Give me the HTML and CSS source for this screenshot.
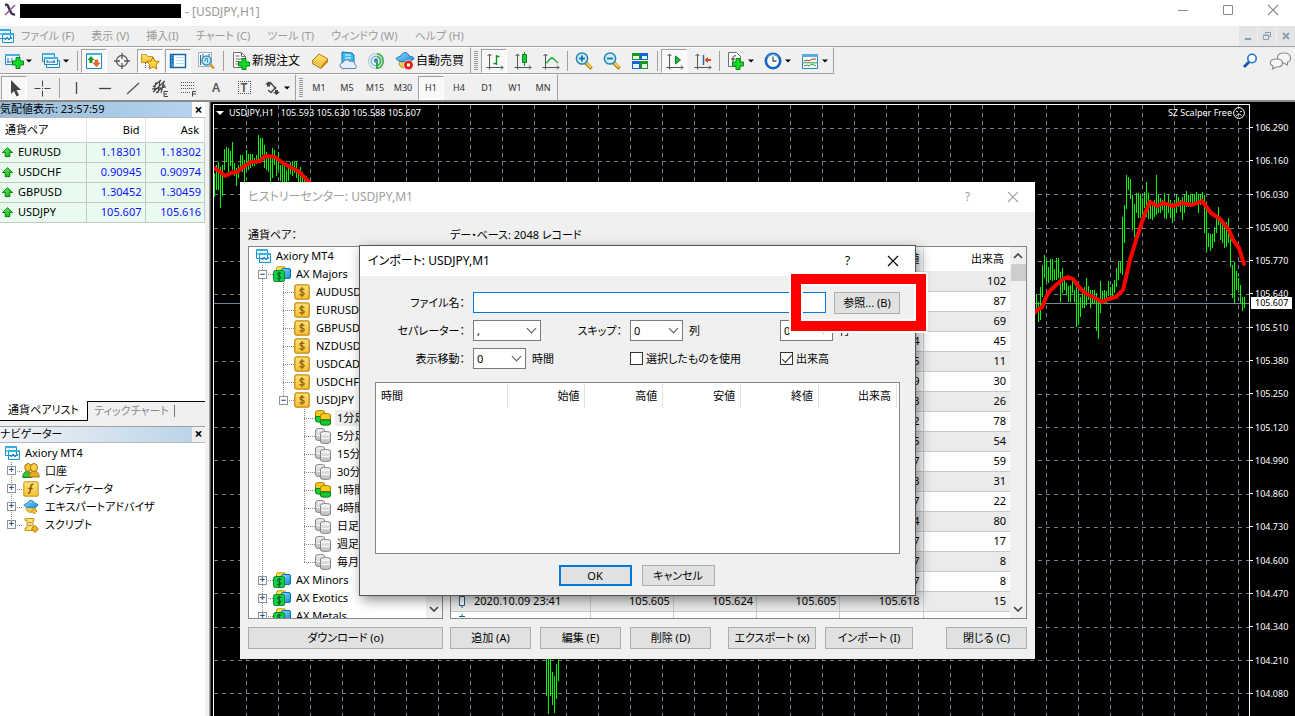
FILE: index.html
```html
<!DOCTYPE html>
<html lang="ja">
<head>
<meta charset="utf-8">
<title>[USDJPY,H1]</title>
<link rel="stylesheet" href="styles.css">
</head>
<body>
<svg class="defs" aria-hidden="true">
  <defs>
    <linearGradient id="gold" x1="0" y1="0" x2="0" y2="1"><stop offset="0" stop-color="#ffe27a"/><stop offset="1" stop-color="#f2bf35"/></linearGradient>
    <linearGradient id="green" x1="0" y1="0" x2="1" y2="1"><stop offset="0" stop-color="#6cf06c"/><stop offset="1" stop-color="#0aa80a"/></linearGradient>
    <linearGradient id="blue" x1="0" y1="0" x2="1" y2="1"><stop offset="0" stop-color="#8fdcff"/><stop offset="1" stop-color="#1489d6"/></linearGradient>
    <linearGradient id="grey" x1="0" y1="0" x2="0" y2="1"><stop offset="0" stop-color="#f2f2f2"/><stop offset="1" stop-color="#bcbcbc"/></linearGradient>
  </defs>
  <symbol id="i-plus" viewBox="0 0 12 12"><path d="M4 .5h4V4h3.500v4H8v3.500H4V8H.5V4H4z" fill="#10dc26" stroke="#078514"/></symbol>
  <symbol id="i-newchart" viewBox="0 0 20 20"><path d="M1.500 3.500h14v10h-14z" fill="#eaf8ff" stroke="#2a86b8"/><path d="M1 3h15v2H1z" fill="#4cb0de"/><path d="M4 7v5M3 11h9M8 7v3" stroke="#2879a5" fill="none"/><use href="#i-plus" x="8" y="6" width="12" height="12"/></symbol>
  <symbol id="i-profiles" viewBox="0 0 20 20"><g fill="#e8f7ff" stroke="#2a86b8"><path d="M1.500 2.500h12v8h-12z"/><path d="M5.500 9.500h13v7h-13z"/><path d="M3.500 6.500h13v7h-13z"/></g><path d="M1 2h13v2H1zM3 6h14v2H3z" fill="#4cb0de"/><path d="M6 11h8M6 9v3M13 9v3" stroke="#1674ad"/></symbol>
  <symbol id="i-watch" viewBox="0 0 20 20"><path d="M2.500 2.500h15v15h-15z" fill="#fff" stroke="#2185c4"/><path d="M2 2h16v2H2z" fill="#43aee0"/><path d="M7 5l3.500 4H8.500v3h-3V9h-2z" fill="#159a1b"/><path d="M12.500 16L9 12h2V9h3v3h2z" fill="#f26a32" stroke="#c43c10" stroke-width=".5"/></symbol>
  <symbol id="i-target" viewBox="0 0 20 20"><g fill="none" stroke="#5a5a5a" stroke-width="1.300"><circle cx="10" cy="10" r="5.500"/><path d="M10 2v6M10 12v6M2 10h6M12 10h6"/></g></symbol>
  <symbol id="i-fav" viewBox="0 0 20 20"><path d="M1.500 3.500h5l1 2h5v6h-11z" fill="url(#gold)" stroke="#c79a1d"/><path d="M5.500 12v6" stroke="#444" stroke-dasharray="1 1"/><path d="M13 6l1.900 4 4.300.6-3.100 3 .7 4.400-3.800-2.100L9.200 18l.7-4.400-3.100-3 4.300-.6z" fill="#ffd23e" stroke="#b57f12"/></symbol>
  <symbol id="i-data" viewBox="0 0 20 20"><path d="M2.500 3.500h15v13h-15z" fill="#fff" stroke="#1266a8" stroke-width="1.400"/><path d="M3 4h3v12H3z" fill="#3b94d2"/><path d="M4 5.500h1M4 8.500h1M4 11.500h1" stroke="#143d66"/><path d="M8 6.500h8M8 9.500h8M8 12.500h8" stroke="#b7e1f4"/></symbol>
  <symbol id="i-tester" viewBox="0 0 20 20"><path d="M2.500 1.500h13v14h-13z" fill="#f1f8fc" stroke="#9fb4c2"/><path d="M4.500 4v10M7 3v3M13 3v3" stroke="#3d6785"/><circle cx="10.500" cy="9.500" r="4.500" fill="#b9e4f8" stroke="#3d93c0" stroke-width="1.500"/><path d="M8.500 9.500h1V7.500h2v4" stroke="#3d93c0" fill="none"/><path d="M14 13l4 4.500" stroke="#d79a24" stroke-width="2.500"/></symbol>
  <symbol id="i-order" viewBox="0 0 20 20"><path d="M2.500 1.500h8l4 4v11h-12z" fill="#fff" stroke="#6d6d6d"/><path d="M10.500 1.500v4h4M4.500 5h4M4.500 8h8M4.500 10.500h4M4.500 13h4" stroke="#6d6d6d" fill="none"/><use href="#i-plus" x="7" y="7" width="12" height="12"/></symbol>
  <symbol id="i-book" viewBox="0 0 20 20"><path d="M2 10l7-7 9 5-7 8z" fill="url(#gold)" stroke="#b47c0c"/><path d="M2 10v3l9 5v-2zM11 16l7-8v3l-7 7z" fill="#c8860b"/><path d="M3 11.500l8 4.500" stroke="#fff2b8"/></symbol>
  <symbol id="i-cloud" viewBox="0 0 20 20"><path d="M4 1l10 1 2 2v10H4z" fill="#39b7f0" stroke="#1173ba"/><path d="M7 4h6M7 7h6" stroke="#fff"/><path d="M5 17.500a3 3 0 010-6 4 4 0 017-1 3.500 3.500 0 015 3 2.200 2.200 0 010 4z" fill="#e6eefa" stroke="#6983aa"/></symbol>
  <symbol id="i-signal" viewBox="0 0 20 20"><g fill="none"><circle cx="10" cy="10" r="7.500" stroke="#a9ccd8" stroke-width="1.200"/><circle cx="10" cy="10" r="4.800" stroke="#6fb0c8" stroke-width="1.200"/><path d="M11 2.600a7.500 7.500 0 01.5 14.600M11 5.400a4.800 4.800 0 010 9.200" stroke="#41b153" stroke-width="1.600"/></g><circle cx="10" cy="9.500" r="2.200" fill="#4381cf"/><path d="M10 11h2v7h-2z" fill="#2fa942"/></symbol>
  <symbol id="i-expert" viewBox="0 0 20 20"><path d="M6 9h8l2 3-4 4c-3 2-7 0-8-3z" fill="url(#gold)" stroke="#b88b1b"/><path d="M14 11.500l3.500 3.500-3.500 3.500-3.500-3.500z" fill="#f4c02b" stroke="#b07a0b"/><path d="M1 7.500c1-2 4-1.500 5-2.500 1-4.500 7-4.500 8 0 2 .5 4 .5 5 2.500-2 3-5 3.500-9 3.500S3 10.500 1 7.500z" fill="url(#blue)" stroke="#1479ac"/></symbol>
  <symbol id="i-auto" viewBox="0 0 20 20"><use href="#i-expert" width="20" height="20"/><circle cx="13.500" cy="14" r="4.800" fill="#e32213" stroke="#fff" stroke-width=".6"/><path d="M12 12.500h3v3h-3z" fill="#fff"/></symbol>
  <symbol id="i-axes" viewBox="0 0 20 20"><path d="M5.500 3v13.500H19M3.500 5l2-2 2 2M2.500 16.500h3v2M17 14.500l2 2-2 2" fill="none" stroke="#555"/></symbol>
  <symbol id="i-bars" viewBox="0 0 20 20"><use href="#i-axes" width="20" height="20"/><path d="M12.500 4v10M12.500 5.500h3M9.500 12.500h3" stroke="#0a9422" stroke-width="1.300"/></symbol>
  <symbol id="i-candles" viewBox="0 0 20 20"><use href="#i-axes" width="20" height="20"/><path d="M12.500 1v14" stroke="#087b1c"/><path d="M10.500 3.500h4v8h-4z" fill="#12cf35" stroke="#087b1c"/></symbol>
  <symbol id="i-line" viewBox="0 0 20 20"><use href="#i-axes" width="20" height="20"/><path d="M5 13c3-1 4-6 7-6 2 0 3 3 6 5" fill="none" stroke="#0da428" stroke-width="1.300"/></symbol>
  <symbol id="i-lens" viewBox="0 0 20 20"><path d="M11 11l6.500 6.500" stroke="#a87311" stroke-width="3.600"/><path d="M11.500 11l5.500 5.500" stroke="#ffd147" stroke-width="2"/><circle cx="8" cy="7.500" r="5.600" fill="#c9edfb" stroke="#2785b3" stroke-width="1.500"/><path d="M5 7.500h6" stroke="#1a6d9c" stroke-width="1.700"/></symbol>
  <symbol id="i-zoomin" viewBox="0 0 20 20"><use href="#i-lens" width="20" height="20"/><path d="M8 4.500v6" stroke="#1a6d9c" stroke-width="1.700"/></symbol>
  <symbol id="i-tile" viewBox="0 0 20 20"><path d="M2 2h8v7H2zM10 10h8v8h-8z" fill="#179a20"/><path d="M10 2h8v7h-8zM2 10h8v8H2z" fill="#1565d0"/><path d="M3 5h6v3H3zM12 5h5v3h-5zM3 13h6v4H3zM12 13h5v4h-5z" fill="#e9f8ff"/></symbol>
  <symbol id="i-scroll" viewBox="0 0 20 20"><use href="#i-axes" width="20" height="20"/><path d="M11.500 5l5 4-5 4z" fill="#22b544" stroke="#07882a"/></symbol>
  <symbol id="i-shift" viewBox="0 0 20 20"><use href="#i-axes" width="20" height="20"/><path d="M11.500 4v10" stroke="#246ca0" stroke-width="1.500"/><path d="M12.500 9l3.500-3v2h3v2h-3v2z" fill="#d6481c"/></symbol>
  <symbol id="i-indic" viewBox="0 0 20 20"><path d="M2.500 1.500h8l4 4v10h-12z" fill="#fff" stroke="#6d6d6d"/><path d="M10 5c-3-1-3 1-3 3v5M5 8h4" stroke="#333" fill="none"/><use href="#i-plus" x="6" y="7" width="12" height="12"/></symbol>
  <symbol id="i-clock" viewBox="0 0 20 20"><circle cx="10" cy="10" r="7.200" fill="#f2fbff" stroke="#1667bd" stroke-width="2.600"/><path d="M4.500 6a7 7 0 0111 0" fill="none" stroke="#63b6ef"/><path d="M10 5.500V10h3.500" fill="none" stroke="#555" stroke-width="1.300"/></symbol>
  <symbol id="i-tmpl" viewBox="0 0 20 20"><path d="M2.500 3.500h15v14h-15z" fill="#fff" stroke="#2985c2"/><path d="M2 3h16v3H2z" fill="#53ade0"/><path d="M4 10l3-1 2 1 3-2h4" fill="none" stroke="#ab3326"/><path d="M4 15l3-1 2 1 3-2 4 2M3 11.800h14" fill="none" stroke="#299a42"/></symbol>
  <symbol id="i-cursor" viewBox="0 0 20 20"><path d="M7 2v14l3-3 2.500 5.500 2.500-1.200-2.500-5.300H17z" fill="#444"/></symbol>
  <symbol id="i-cross" viewBox="0 0 20 20"><path d="M10.500 2.500v6M10.500 12.500v6M2.500 10.500h6M12.500 10.500h6" stroke="#444"/><path d="M10 10h1v1h-1z" fill="#444"/></symbol>
  <symbol id="i-v" viewBox="0 0 20 20"><path d="M10.500 4v12" stroke="#444" stroke-width="1.300"/></symbol>
  <symbol id="i-h" viewBox="0 0 20 20"><path d="M5 10.500h12" stroke="#444" stroke-width="1.300"/></symbol>
  <symbol id="i-trend" viewBox="0 0 20 20"><path d="M5 16L17 5" stroke="#555" stroke-width="1.300"/></symbol>
  <symbol id="i-channel" viewBox="0 0 20 20"><path d="M3 14L15 3M3 9l8-7M6 15l9-8M6 4L4 14M10 3L8 15M14 3l-3 12M2 11l14-2" stroke="#444" stroke-width="1.100"/><path d="M18 13.500h-4v5h4M14 16h3" fill="none" stroke="#444"/></symbol>
  <symbol id="i-fibo" viewBox="0 0 20 20"><path d="M3 4.500h14M3 7.500h14M3 10.500h14M3 14.500h10" stroke="#555" stroke-dasharray="1 1"/><path d="M18 13.500h-3.500v5M14.500 16H18" fill="none" stroke="#444"/></symbol>
  <symbol id="i-arrows" viewBox="0 0 20 20"><path d="M6.500 3.500l3.500 3H8v2H5v-2H3zM14.500 17l-3.500-3h2v-2h3v2h2z" fill="#444"/><path d="M6 12l3 2.500 5-5.500M8 4l6 7" fill="none" stroke="#444" stroke-width="1.300"/></symbol>
  <symbol id="i-caret" viewBox="0 0 8 8"><path d="M1 2.500h6L4 5.500z" fill="#000"/></symbol>
  <symbol id="i-find" viewBox="0 0 16 16"><circle cx="10" cy="5.500" r="4.200" fill="#fff" stroke="#1e74cf" stroke-width="1.600"/><path d="M7 9l-5 5" stroke="#1558ae" stroke-width="2.800"/></symbol>
  <symbol id="i-chat" viewBox="0 0 22 18"><g fill="#f7f7f7" stroke="#8b8b8b" stroke-width="1.200"><path d="M14 1c5 0 7 2 7 5s-2 4-3 4v3l-4-2c-4 0-6-2-6-5s2-5 6-5z"/><path d="M7 7c4 0 6 1.500 6 4s-2 4-6 4l-4 2 .5-3C1 13 .8 12 .8 11c0-2.500 2-4 6.200-4z"/></g></symbol>
  <symbol id="i-up" viewBox="0 0 12 12"><path d="M6 .8L11.500 6H8.500v4.500h-5V6H.5z" fill="url(#green)" stroke="#067406"/></symbol>
  <symbol id="i-mt" viewBox="0 0 16 16"><path d="M1.500 1.500h11v9h-11zM4.500 5.500h11v9h-11z" fill="#edfaff" stroke="#1794ce"/><path d="M1 1h12v2H1zM4 5h12v2H4z" fill="#38afe2"/><path d="M6 10l1.500 2L9 9l2 3 2-3 1 2M3 5v2" fill="none" stroke="#2580b5"/></symbol>
  <symbol id="i-group" viewBox="0 0 18 16"><rect x="3.500" y=".8" width="9" height="9" rx="1.500" fill="#ffe34c" stroke="#b59a09"/><rect x="8.500" y="2.500" width="9" height="10" rx="1.500" fill="url(#blue)" stroke="#0874a8"/><rect x=".6" y="4.600" width="11" height="11" rx="1.800" fill="#12d44a" stroke="#067d25"/><path d="M8.500 7.500c-5-2-5 2-2.300 2.500 3 .7 2.300 4-2.500 2.300M6.200 6v9" fill="none" stroke="#064f16"/></symbol>
  <symbol id="i-sym" viewBox="0 0 16 16"><rect x=".8" y=".8" width="14.400" height="14.400" rx="2" fill="url(#gold)" stroke="#c58a10" stroke-width="1.300"/><path d="M10.500 5.500C5 3.500 5 7.500 8 8c3.500.7 3 4.500-2.700 2.600M8 3v10" fill="none" stroke="#8a5a04" stroke-width="1.100"/></symbol>
  <symbol id="i-db" viewBox="0 0 16 16"><g fill="url(#grey)" stroke="#858585"><path d="M.6 2c0-2 9-2 9 0v9c0 2-9 2-9 0z"/><path d="M5.500 5c0-2 10-2 10 0v9c0 2-10 2-10 0z"/></g><path d="M1 6.500c1 1 3 1 4 1M6 9.800c2 1 7 1 9 0M6 5.600c2 1 7 1 9 0" stroke="#fff" fill="none"/></symbol>
  <symbol id="i-dbon" viewBox="0 0 16 16"><path d="M.6 2c0-2 9-2 9 0v4.500h-9z" fill="#f3cc1c" stroke="#a47d06"/><path d="M.6 6.500h8V11c0 1.500-8 1.500-8 0z" fill="#19cf33" stroke="#078016"/><path d="M5.500 5c0-2 10-2 10 0v4.500h-10z" fill="#f3cc1c" stroke="#a47d06"/><path d="M5.500 10h10v4c0 1.700-10 1.700-10 0z" fill="#16c82f" stroke="#078016"/></symbol>
  <symbol id="i-acct" viewBox="0 0 18 16"><path d="M.8 14.500C.8 6 10 6 10 14.500z" fill="#2fc43e" stroke="#12841e"/><ellipse cx="6" cy="4.500" rx="3.300" ry="4" fill="#f5c33a" stroke="#a8740c"/><path d="M7 14c0-8 10-8 10.200 0z" fill="#e6aa1d" stroke="#a8740c"/><ellipse cx="12" cy="4.500" rx="3.500" ry="4" fill="#ffd34a" stroke="#a8740c"/></symbol>
  <symbol id="i-func" viewBox="0 0 16 16"><rect x=".8" y=".8" width="14.400" height="14.400" rx="1" fill="url(#gold)" stroke="#c7950f"/><path d="M10.500 3.500c-3-.8-2.500 2-3 5s-.8 4-2.500 3.500M5.500 7.500h4" fill="none" stroke="#7b4f05" stroke-width="1.300"/></symbol>
  <symbol id="i-script" viewBox="0 0 16 16"><path d="M2 1.500h9v2H10V11h3v2.500H2V11h2V3.500H2z" fill="#ffe07a" stroke="#c3921b"/><path d="M5.500 5.500h3M5.500 8.500h3" stroke="#b2831b"/><path d="M12 8.500l3.500 3.500-3.500 3.500L8.500 12z" fill="#f0b31b" stroke="#b07a0b"/></symbol>
  <symbol id="i-x" viewBox="0 0 12 12"><path d="M1 1l10 10M11 1L1 11" fill="none" stroke="currentColor" stroke-width="1.100"/></symbol>
  <symbol id="i-chev" viewBox="0 0 10 6"><path d="M1 1l4 4 4-4" fill="none" stroke="currentColor" stroke-width="1.600"/></symbol>
</svg>

<header class="titlebar">
  <svg class="logo" viewBox="0 0 14 14"><path d="M2 2c3-1 3 1 4.500 4.500S9 12 12 11.500" fill="none" stroke="#3e2a55" stroke-width="2.400"/><path d="M12 2L2 12" stroke="#8a4f91" stroke-width="1.500"/></svg>
  <span class="redacted"></span>
  <span class="caption">- [USDJPY,H1]</span>
  <div class="wincontrols">
    <button aria-label="最小化"><svg viewBox="0 0 12 12"><path d="M1 6.500h10" stroke="currentColor"/></svg></button>
    <button aria-label="最大化"><svg viewBox="0 0 12 12"><path d="M1.500 1.500h9v9h-9z" fill="none" stroke="currentColor"/></svg></button>
    <button aria-label="終了"><svg><use href="#i-x"/></svg></button>
  </div>
</header>
<nav class="menubar">
  <svg class="i16"><use href="#i-mt"/></svg>
  <button>ファイル (F)</button><button>表示 (V)</button><button>挿入(I)</button><button>チャート (C)</button><button>ツール (T)</button><button>ウィンドウ (W)</button><button>ヘルプ (H)</button>
  <div class="mdi">
    <button aria-label="子を最小化"><svg viewBox="0 0 10 10"><path d="M2 8h6" stroke="currentColor" stroke-width="2"/></svg></button>
    <button aria-label="元に戻す"><svg viewBox="0 0 10 10"><path d="M3.500 3V1.500h5v4H7M1.500 4.500h5v4h-5zM1 4h6M3 1.500h6" fill="none" stroke="currentColor"/></svg></button>
    <button aria-label="子を閉じる"><svg viewBox="0 0 10 10"><path d="M2 2l6 6M8 2L2 8" stroke="currentColor" stroke-width="2"/></svg></button>
  </div>
</nav>

<div class="toolbars">
  <div class="toolrow">
    <div class="bar">
      <button class="tool drop" aria-label="新規チャート"><svg><use href="#i-newchart"/></svg><svg class="caret"><use href="#i-caret"/></svg></button>
      <button class="tool drop" aria-label="プロファイル"><svg><use href="#i-profiles"/></svg><svg class="caret"><use href="#i-caret"/></svg></button>
      <i class="sep"></i>
      <button class="tool on" aria-label="気配値"><svg><use href="#i-watch"/></svg></button>
      <button class="tool" aria-label="ターゲット"><svg><use href="#i-target"/></svg></button>
      <button class="tool on" aria-label="ナビゲーター"><svg><use href="#i-fav"/></svg></button>
      <button class="tool on" aria-label="ターミナル"><svg><use href="#i-data"/></svg></button>
      <button class="tool" aria-label="テスター"><svg><use href="#i-tester"/></svg></button>
      <i class="sep"></i>
      <button class="tool wide"><svg><use href="#i-order"/></svg>新規注文</button>
      <button class="tool" aria-label="MetaEditor"><svg><use href="#i-book"/></svg></button>
      <button class="tool" aria-label="クラウド"><svg><use href="#i-cloud"/></svg></button>
      <button class="tool" aria-label="シグナル"><svg><use href="#i-signal"/></svg></button>
      <button class="tool wide"><svg><use href="#i-auto"/></svg>自動売買</button>
    </div>
    <div class="bar">
      <i class="grip"></i>
      <button class="tool on" aria-label="バー"><svg><use href="#i-bars"/></svg></button>
      <button class="tool" aria-label="ローソク足"><svg><use href="#i-candles"/></svg></button>
      <button class="tool" aria-label="ライン"><svg><use href="#i-line"/></svg></button>
      <i class="sep"></i>
      <button class="tool" aria-label="拡大"><svg><use href="#i-zoomin"/></svg></button>
      <button class="tool" aria-label="縮小"><svg><use href="#i-lens"/></svg></button>
      <button class="tool" aria-label="整列"><svg><use href="#i-tile"/></svg></button>
      <i class="sep"></i>
      <button class="tool on" aria-label="自動スクロール"><svg><use href="#i-scroll"/></svg></button>
      <button class="tool" aria-label="シフト"><svg><use href="#i-shift"/></svg></button>
      <i class="sep"></i>
      <button class="tool drop" aria-label="インディケータ"><svg><use href="#i-indic"/></svg><svg class="caret"><use href="#i-caret"/></svg></button>
      <button class="tool drop" aria-label="時間足"><svg><use href="#i-clock"/></svg><svg class="caret"><use href="#i-caret"/></svg></button>
      <button class="tool drop" aria-label="テンプレート"><svg><use href="#i-tmpl"/></svg><svg class="caret"><use href="#i-caret"/></svg></button>
    </div>
    <div class="right">
      <button aria-label="検索"><svg class="i16"><use href="#i-find"/></svg></button>
      <button aria-label="チャット"><svg class="chat"><use href="#i-chat"/></svg></button>
    </div>
  </div>
  <div class="toolrow">
    <div class="bar">
      <button class="tool on" aria-label="カーソル"><svg><use href="#i-cursor"/></svg></button>
      <button class="tool" aria-label="十字"><svg><use href="#i-cross"/></svg></button>
      <i class="sep"></i>
      <button class="tool" aria-label="垂直線"><svg><use href="#i-v"/></svg></button>
      <button class="tool" aria-label="水平線"><svg><use href="#i-h"/></svg></button>
      <button class="tool" aria-label="トレンドライン"><svg><use href="#i-trend"/></svg></button>
      <button class="tool" aria-label="チャネル"><svg><use href="#i-channel"/></svg></button>
      <button class="tool" aria-label="フィボナッチ"><svg><use href="#i-fibo"/></svg></button>
      <button class="tool letter">A</button>
      <button class="tool letter framed">T</button>
      <button class="tool drop" aria-label="矢印"><svg><use href="#i-arrows"/></svg><svg class="caret"><use href="#i-caret"/></svg></button>
    </div>
    <div class="bar">
      <i class="grip"></i>
      <button class="tool">M1</button><button class="tool">M5</button><button class="tool">M15</button><button class="tool">M30</button><button class="tool on">H1</button><button class="tool">H4</button><button class="tool">D1</button><button class="tool">W1</button><button class="tool">MN</button>
    </div>
  </div>
</div>

<main class="work">
  <aside class="side">
    <section class="watch">
      <div class="dockhead strong"><h2>気配値表示: 23:57:59</h2><button aria-label="閉じる">×</button></div>
      <table class="quotes">
        <thead><tr><th>通貨ペア</th><th>Bid</th><th>Ask</th></tr></thead>
        <tbody>
          <tr><td><svg><use href="#i-up"/></svg>EURUSD</td><td>1.18301</td><td>1.18302</td></tr>
          <tr><td><svg><use href="#i-up"/></svg>USDCHF</td><td>0.90945</td><td>0.90974</td></tr>
          <tr><td><svg><use href="#i-up"/></svg>GBPUSD</td><td>1.30452</td><td>1.30459</td></tr>
          <tr><td><svg><use href="#i-up"/></svg>USDJPY</td><td>105.607</td><td>105.616</td></tr>
        </tbody>
      </table>
      <div class="tabs"><button class="active">通貨ペアリスト</button><button>ティックチャート</button></div>
    </section>
    <section class="navi">
      <div class="dockhead"><h2>ナビゲーター</h2><button aria-label="閉じる">×</button></div>
      <ul class="tree">
        <li><svg><use href="#i-mt"/></svg>Axiory MT4</li>
        <li><i class="g v h"><b>+</b></i><svg class="w18"><use href="#i-acct"/></svg>口座</li>
        <li><i class="g v h"><b>+</b></i><svg class="w18"><use href="#i-func"/></svg>インディケータ</li>
        <li><i class="g v h"><b>+</b></i><svg class="w18"><use href="#i-expert"/></svg>エキスパートアドバイザ</li>
        <li><i class="g v h last"><b>+</b></i><svg class="w18"><use href="#i-script"/></svg>スクリプト</li>
      </ul>
    </section>
  </aside>
  <section class="chart">
    <div class="plot">
      <svg id="plot"></svg>
      <div class="plothead"><span class="ohlc"><svg class="caret" viewBox="0 0 8 8"><path d="M0 2h8L4 6z" fill="#fff"/></svg><b>USDJPY,H1</b>105.593 105.630 105.588 105.607</span>
        <span class="ea">SZ Scalper Free<svg viewBox="0 0 12 12"><g fill="none" stroke="#fff"><circle cx="6" cy="6" r="5.400"/><path d="M3.500 9c1-2.500 4-2.500 5 0M3 4l2 1M9 4L7 5"/></g></svg></span></div>
    </div>
    <div class="prices">
      <span>106.290</span><span>106.160</span><span>106.030</span><span>105.900</span><span>105.770</span><span>105.640</span><span>105.510</span><span>105.380</span><span>105.250</span><span>105.120</span><span>104.990</span><span>104.860</span><span>104.730</span><span>104.600</span><span>104.470</span><span>104.340</span><span>104.210</span><span>104.080</span>
      <strong class="now">105.607</strong>
    </div>
  </section>
</main>

<div class="window history" role="dialog" aria-label="ヒストリーセンター">
  <div class="wtitle"><h1>ヒストリーセンター: USDJPY,M1</h1><button>?</button><button aria-label="閉じる"><svg><use href="#i-x"/></svg></button></div>
  <div class="hbody">
    <div class="hleft">
      <p>通貨ペア：</p>
      <div class="box">
        <ul class="tree">
          <li><svg><use href="#i-mt"/></svg>Axiory MT4</li>
          <li><i class="g v h"><b>−</b></i><svg class="w18"><use href="#i-group"/></svg>AX Majors</li>
          <li><i class="g v"></i><i class="g v h"></i><svg><use href="#i-sym"/></svg>AUDUSD</li>
          <li><i class="g v"></i><i class="g v h"></i><svg><use href="#i-sym"/></svg>EURUSD</li>
          <li><i class="g v"></i><i class="g v h"></i><svg><use href="#i-sym"/></svg>GBPUSD</li>
          <li><i class="g v"></i><i class="g v h"></i><svg><use href="#i-sym"/></svg>NZDUSD</li>
          <li><i class="g v"></i><i class="g v h"></i><svg><use href="#i-sym"/></svg>USDCAD</li>
          <li><i class="g v"></i><i class="g v h"></i><svg><use href="#i-sym"/></svg>USDCHF</li>
          <li><i class="g v"></i><i class="g v h last"><b>−</b></i><svg><use href="#i-sym"/></svg>USDJPY</li>
          <li><i class="g v"></i><i class="g"></i><i class="g v h"></i><svg><use href="#i-dbon"/></svg><span class="sel">1分足 (M1)</span></li>
          <li><i class="g v"></i><i class="g"></i><i class="g v h"></i><svg><use href="#i-db"/></svg>5分足</li>
          <li><i class="g v"></i><i class="g"></i><i class="g v h"></i><svg><use href="#i-db"/></svg>15分足</li>
          <li><i class="g v"></i><i class="g"></i><i class="g v h"></i><svg><use href="#i-db"/></svg>30分足</li>
          <li><i class="g v"></i><i class="g"></i><i class="g v h"></i><svg><use href="#i-dbon"/></svg>1時間足</li>
          <li><i class="g v"></i><i class="g"></i><i class="g v h"></i><svg><use href="#i-db"/></svg>4時間足</li>
          <li><i class="g v"></i><i class="g"></i><i class="g v h"></i><svg><use href="#i-db"/></svg>日足</li>
          <li><i class="g v"></i><i class="g"></i><i class="g v h"></i><svg><use href="#i-db"/></svg>週足</li>
          <li><i class="g v"></i><i class="g"></i><i class="g v h last"></i><svg><use href="#i-db"/></svg>毎月</li>
          <li><i class="g v h"><b>+</b></i><svg class="w18"><use href="#i-group"/></svg>AX Minors</li>
          <li><i class="g v h"><b>+</b></i><svg class="w18"><use href="#i-group"/></svg>AX Exotics</li>
          <li><i class="g v h"><b>+</b></i><svg class="w18"><use href="#i-group"/></svg>AX Metals</li>
        </ul>
        <div class="scroll"><svg class="flip"><use href="#i-chev"/></svg><i class="thumb"></i><svg class="down"><use href="#i-chev"/></svg></div>
      </div>
      <button class="btn">ダウンロード (o)</button>
    </div>
    <div class="hright">
      <p>デー・ベース: 2048 レコード</p>
      <div class="box">
        <table class="records">
          <colgroup><col class="c-time"><col><col><col><col><col class="c-vol"></colgroup>
          <thead><tr><th>時間</th><th>始値</th><th>高値</th><th>安値</th><th>終値</th><th>出来高</th></tr></thead>
          <tbody>
            <tr><td></td><td></td><td></td><td></td><td></td><td>102</td></tr>
            <tr><td></td><td></td><td></td><td></td><td></td><td>87</td></tr>
            <tr><td></td><td></td><td></td><td></td><td></td><td>69</td></tr>
            <tr><td></td><td></td><td></td><td></td><td>105.614</td><td>45</td></tr>
            <tr><td></td><td></td><td></td><td></td><td>105.615</td><td>11</td></tr>
            <tr><td></td><td></td><td></td><td></td><td>105.619</td><td>30</td></tr>
            <tr><td></td><td></td><td></td><td></td><td>105.613</td><td>26</td></tr>
            <tr><td></td><td></td><td></td><td></td><td>105.612</td><td>78</td></tr>
            <tr><td></td><td></td><td></td><td></td><td>105.615</td><td>54</td></tr>
            <tr><td></td><td></td><td></td><td></td><td>105.617</td><td>59</td></tr>
            <tr><td></td><td></td><td></td><td></td><td>105.613</td><td>31</td></tr>
            <tr><td></td><td></td><td></td><td></td><td>105.617</td><td>22</td></tr>
            <tr><td></td><td></td><td></td><td></td><td>105.614</td><td>80</td></tr>
            <tr><td></td><td></td><td></td><td></td><td>105.617</td><td>17</td></tr>
            <tr><td></td><td></td><td></td><td></td><td>105.617</td><td>8</td></tr>
            <tr><td></td><td></td><td></td><td></td><td>105.617</td><td>8</td></tr>
            <tr><td><svg viewBox="0 0 8 14"><path d="M1.500 2.500h5v9h-5zM4 0v2M4 12v2" fill="#fff" stroke="#1b5f86"/></svg>2020.10.09 23:41</td><td>105.605</td><td>105.624</td><td>105.605</td><td>105.618</td><td>15</td></tr>
            <tr><td><svg viewBox="0 0 8 14"><path d="M4 0v3M1 2.500h6" fill="none" stroke="#1b5f86"/></svg></td><td></td><td></td><td></td><td></td><td></td></tr>
          </tbody>
        </table>
        <div class="scroll"><svg class="flip"><use href="#i-chev"/></svg><i class="thumb"></i><svg class="down"><use href="#i-chev"/></svg></div>
      </div>
      <div class="actions"><button class="btn">追加 (A)</button><button class="btn">編集 (E)</button><button class="btn">削除 (D)</button><i></i><button class="btn long">エクスポート (x)</button><button class="btn long">インポート (I)</button><button class="btn end">閉じる (C)</button></div>
    </div>
  </div>
</div>

<div class="window import" role="dialog" aria-label="インポート">
  <div class="wtitle"><h1>インポート: USDJPY,M1</h1><button>?</button><button aria-label="閉じる"><svg><use href="#i-x"/></svg></button></div>
  <form class="form" onsubmit="return false">
    <label for="file">ファイル名：</label>
    <div class="cell filerow"><input type="text" id="file"><button class="btn">参照... (B)</button></div>
    <label for="delim">セパレーター：</label>
    <div class="cell"><span class="pick wide"><select id="delim"><option>,</option></select></span><label class="push" for="skipc">スキップ：</label></div>
    <div class="cell"><span class="pick"><select id="skipc"><option>0</option></select></span><label for="skipc">列</label></div>
    <div class="cell"><span class="pick"><select id="skipr"><option>0</option></select></span><label for="skipr">行</label></div>
    <label for="shift">表示移動：</label>
    <div class="cell"><span class="pick"><select id="shift"><option>0</option></select></span><label for="shift">時間</label></div>
    <div class="cell check"><input type="checkbox" id="usesel"><label for="usesel">選択したものを使用</label></div>
    <div class="cell check"><input type="checkbox" id="vol" checked><label for="vol">出来高</label></div>
  </form>
  <div class="preview">
    <table><thead><tr><th>時間</th><th>始値</th><th>高値</th><th>安値</th><th>終値</th><th>出来高</th></tr></thead></table>
  </div>
  <div class="confirm"><button class="btn primary">OK</button><button class="btn">キャンセル</button></div>
  <div class="mark"></div>
</div>
<script src="chart.js"></script>
</body>
</html>
```

FILE: styles.css
```css
*, *::before, *::after { box-sizing: border-box; }
html, body { height: 100%; }
body {
  margin: 0; display: flex; flex-direction: column; overflow: hidden; position: relative;
  background: #f0f0f0; color: #000;
  font: 11px/16px "Noto Sans", "Noto Sans CJK JP", sans-serif;
  font-feature-settings: "palt";
}
button, input, select { font: inherit; color: inherit; font-feature-settings: inherit; }
button { margin: 0; padding: 0; border: 0; background: none; white-space: nowrap; }
h1, h2, p, ul { margin: 0; padding: 0; font-weight: 400; font-size: inherit; list-style: none; }
svg { flex: none; display: block; }
.defs { position: absolute; width: 0; height: 0; }
.i16 { width: 16px; height: 16px; }

.titlebar { flex: none; height: 26px; display: flex; align-items: flex-start; background: #fff; color: #999; font-size: 12px; padding: 3px 0 0 3px; }
.logo { width: 14px; height: 14px; margin-right: 3px; }
.redacted { width: 161px; height: 14px; background: #000; margin-top: 1px; }
.caption { margin-left: 4px; line-height: 18px; }
.wincontrols { margin-left: auto; display: flex; }
.wincontrols button { width: 45px; height: 14px; display: flex; justify-content: center; align-items: center; color: #888; }
.wincontrols svg { width: 12px; height: 12px; }

.menubar { flex: none; height: 21px; display: flex; align-items: center; gap: 17px; color: #9a9a9a; border-bottom: 1px solid #a0a0a0; }
.menubar > .i16 { margin: 0 -10px 0 -2px; }
.mdi { margin-left: auto; display: flex; gap: 1px; align-self: stretch; }
.mdi button { width: 18px; background: #e4e4e4; color: #8aa0b2; display: flex; justify-content: center; align-items: center; }
.mdi svg { width: 10px; height: 10px; }

.toolbars { flex: none; border-bottom: 2px solid #8a8a8a; }
.toolrow { display: flex; height: 27px; }
.bar { display: flex; align-items: center; border-right: 1px solid #a0a0a0; border-bottom: 1px solid #a0a0a0; border-top: 1px solid #fff; }
.toolrow + .toolrow { height: 26px; }
.toolrow + .toolrow .bar { border-bottom: 0; }
.tool { width: 28px; height: 24px; display: flex; align-items: center; justify-content: center; border: 1px solid transparent; font-size: 9px; color: #333; }
.tool svg { width: 20px; height: 20px; }
.tool .caret, .caret { width: 8px; height: 8px; }
.tool.on { border-color: #a0a0a0 #fff #fff #a0a0a0; background: #f8f8f8; width: 26px; margin: 0 1px; }
.tool.drop { width: 37px; gap: 1px; }
.tool.wide { width: 80px; font-size: 12px; color: #000; justify-content: flex-start; padding-left: 4px; gap: 1px; }
.sep { width: 6px; height: 20px; background: linear-gradient(#a0a0a0, #a0a0a0) center / 1px 100% no-repeat; }
.grip { width: 4px; height: 20px; margin: 0 2px 0 3px; background: repeating-linear-gradient(#999 0 1px, #f0f0f0 1px 2px); }
.tool.letter { font-size: 12px; font-weight: 600; color: #555; }
.framed { position: relative; }
.framed::after { content: ""; width: 13px; height: 13px; position: absolute; border: 1px dotted #555; }
.right { margin-left: auto; display: flex; align-items: center; gap: 11px; padding-right: 3px; }
.chat { width: 23px; height: 18px; }

.work { flex: 1; min-height: 0; display: flex; }
.side { flex: none; width: 210px; padding-right: 4px; display: flex; flex-direction: column; border-right: 1px solid #a0a0a0; }
.watch { flex: 322 1 0; min-height: 0; display: flex; flex-direction: column; padding-bottom: 5px; background: #fff; }
.navi { flex: 292 1 0; min-height: 0; display: flex; flex-direction: column; border-top: 1px solid #a0a0a0; }
.dockhead { flex: none; display: flex; height: 16px; border-bottom: 1px solid #b8b8b8; }
.dockhead h2 { flex: 1; line-height: 14px; background: linear-gradient(90deg, #f0f3f6, #bcd4e8); }
.dockhead.strong h2 { background: linear-gradient(90deg, #98bddb, #b4d3ee); }
.dockhead button { width: 13px; font-size: 14px; line-height: 14px; font-weight: 700; }
.quotes { width: 100%; border-collapse: collapse; background: #fff; table-layout: fixed; }
.quotes th { height: 24px; font-weight: 400; text-align: right; padding: 0 5px; border-right: 1px solid #e0e0e0; }
.quotes th:first-child { text-align: left; width: 86px; }
.quotes th:nth-child(2) { width: 59px; }
.quotes td { height: 20px; padding: 0 3px; border: 1px solid #c4c9c4; border-left: 0; background: #e9fbef; text-align: right; color: #11f; line-height: 18px; }
.quotes td:first-child { text-align: left; color: #000; padding-left: 2px; }
.quotes td svg { display: inline-block; width: 11px; height: 11px; margin-right: 5px; vertical-align: -2px; }
.tabs { margin-top: auto; display: flex; height: 20px; border-top: 1px solid #000; background: #f0f0f0; box-shadow: 0 6px #f0f0f0; }
.tabs button { width: 87px; color: #888; background: linear-gradient(#777, #777) right center / 1px 12px no-repeat; }
.tabs button.active { width: 88px; color: #000; background: #fff; border: solid #000; border-width: 0 1px 1px 0; margin-top: -1px; }

.tree li { display: flex; align-items: center; height: 18px; white-space: nowrap; }
.tree li > svg { width: 16px; height: 16px; margin-right: 6px; }
.tree li > svg.w18 { width: 18px; margin-right: 5px; }
.tree li > svg:first-child { margin: 0 5px 0 3px; }
.navi .tree { flex: 1; background: #fff; padding: 1px; }
.g { width: 21px; height: 18px; position: relative; display: flex; align-items: center; justify-content: center; }
.g.v { background-image: repeating-linear-gradient(#888 0 1px, transparent 1px 2px); background-size: 1px 100%; background-position: 10px 0; background-repeat: no-repeat; }
.g.last { background-size: 1px 50%; }
.g.h::before { content: ""; position: absolute; left: 10px; right: 0; top: 9px; border-top: 1px dotted #888; }
.g b { position: relative; width: 9px; height: 9px; border: 1px solid #919191; background: #fff; color: #234a9c; font: 700 9px/7px "Liberation Sans", sans-serif; text-align: center; }
.sel { background: #ececec; padding: 0 2px; margin-left: -2px; }

.chart { flex: 1; min-width: 0; display: flex; background: #000; color: #fff; padding: 2px 0 0 2px; border-left: 1px solid #555; font-size: 9px; }
.plot { flex: 1; min-width: 0; position: relative; border: solid #fff; border-width: 1px 1px 0 1px; overflow: hidden; }
#plot { width: 100%; height: 100%; position: absolute; }
.plothead { position: relative; display: flex; justify-content: space-between; padding: 1px 4px 0 2px; line-height: 14px; }
.plothead span { display: flex; align-items: center; }
.ohlc svg { margin-right: 5px; }
.ohlc b { font-weight: 400; margin-right: 7px; }
.ea svg { width: 12px; height: 12px; margin-left: 1px; }
.prices { position: relative; flex: none; width: 45px; display: flex; flex-direction: column; justify-content: space-between; padding: 18px 0 16px; line-height: 12px; }
.prices span::before { content: ""; display: inline-block; width: 3px; height: 1px; background: #fff; vertical-align: 3px; margin-right: 2px; }
.now { position: absolute; left: 1px; right: 3px; top: 193px; padding-left: 4px; background: #fff; color: #000; font-weight: 400; }

.window { position: absolute; background: #f0f0f0; display: flex; flex-direction: column; }
.wtitle { flex: none; height: 30px; display: flex; align-items: center; background: #fff; padding: 0 0 0 8px; font-size: 12px; }
.wtitle h1 { flex: 1; }
.wtitle button { width: 45px; display: flex; justify-content: center; }
.wtitle svg { width: 12px; height: 12px; }
.history { left: 240px; top: 182px; width: 795px; height: 477px; }
.history .wtitle { color: #a0a0a0; }
.hbody { flex: 1; min-height: 0; display: flex; gap: 7px; padding: 15px 8px 10px; }
.hleft { width: 195px; display: flex; flex-direction: column; }
.hright { flex: 1; display: flex; flex-direction: column; }
.hbody p { height: 19px; }
.box { flex: 1; min-height: 0; display: flex; border: 1px solid #828790; background: #fff; overflow: hidden; margin-bottom: 8px; }
.box .tree { flex: 1; padding-left: 3px; }
.scroll { flex: none; width: 16px; background: #f0f0f0; color: #444; display: flex; flex-direction: column; align-items: center; padding: 6px 0; }
.scroll svg { width: 10px; height: 6px; }
.flip { transform: rotate(180deg); }
.thumb { width: 15px; height: 17px; background: #cdcdcd; margin-top: 5px; }
.down { margin-top: auto; }
.btn { height: 22px; border: 1px solid #adadad; background: #e1e1e1; text-align: center; line-height: 20px; }
.actions { display: flex; gap: 9px; }
.actions .btn { width: 81px; }
.actions i { margin-right: -1px; }
.actions .long { width: 88px; }
.actions .end { margin-left: auto; }
.records { flex: 1; border-collapse: collapse; table-layout: fixed; height: 0; }
.c-time { width: 139px; }
.c-vol { width: 87px; }
.records th, .records td { text-align: right; padding: 0 3px; border-right: 1px solid #c9c9c9; font-weight: 400; }
.records th { height: 24px; border-color: #e0e0e0; }
.records td { height: 20px; border-bottom: 1px solid #c9c9c9; line-height: 18px; }
.records th:last-child, .records td:last-child { border-right: 0; padding-right: 4px; }
.records th:last-child { padding-right: 6px; }
.records td:first-child { text-align: left; padding-left: 7px; }
.records td svg { display: inline-block; width: 8px; height: 14px; margin-right: 8px; vertical-align: -3px; }
.records tbody tr:nth-child(odd) { background: #ebebeb; }

.import { left: 359px; top: 245px; width: 557px; height: 351px; border: 1px solid #555; box-shadow: 3px 4px 12px rgba(0, 0, 0, .45); }
.form { display: grid; grid-template-columns: 104px 149px 142px 1fr; gap: 7px 8px; padding: 16px 15px 0 1px; align-items: center; }
.form > label { text-align: right; }
.cell { display: flex; align-items: center; height: 21px; white-space: nowrap; }
.filerow { grid-column: 2 / 5; gap: 8px; }
.filerow input { flex: 1; min-width: 0; height: 21px; border: 1px solid #0078d7; background: #fff; outline: 0; }
.filerow .btn { width: 66px; }
.pick { position: relative; width: 53px; margin-right: 6px; }
.pick.wide { width: 68px; }
.pick select { width: 100%; height: 21px; border: 1px solid #7a7a7a; border-radius: 0; background: #fff; appearance: none; padding: 0 3px; display: block; }
.pick::after { content: ""; position: absolute; right: 6px; top: 5px; width: 7px; height: 7px; border: solid #555; border-width: 0 1px 1px 0; transform: rotate(45deg); pointer-events: none; }
.push { margin-left: auto; }
.check input { appearance: none; width: 13px; height: 13px; margin: 0 3px 0 0; border: 1px solid #333; background: #fff; display: grid; place-items: center; }
.check input:checked::before { content: ""; width: 10px; height: 5px; border: solid #333; border-width: 0 0 1px 1px; transform: translateY(-1px) rotate(-48deg); }
.preview { flex: 1; margin: 13px 15px 11px; border: 1px solid #828790; background: #fff; padding: 1px 2px 0 0; }
.preview table { width: 100%; border-collapse: collapse; table-layout: fixed; }
.preview th { height: 24px; font-weight: 400; text-align: right; padding: 0 5px; border-right: 1px solid #e3e3e3; }
.preview th:first-child { text-align: left; width: 131px; }
.confirm { display: flex; justify-content: center; gap: 10px; padding: 0 2px 9px 0; }
.confirm .btn { width: 73px; height: 21px; line-height: 18px; }
.confirm .primary { border: 2px solid #0078d7; line-height: 16px; }
.mark { position: absolute; left: 429px; top: 26px; width: 139px; height: 61px; border: 2px solid #fff; }
.mark::before { content: ""; display: block; height: 100%; border: 10px solid #f00; }
.mark::after { content: ""; position: absolute; inset: 10px; border: 2px solid #fff; }
```

FILE: chart.js
```js
const svg = document.getElementById('plot');
const NS = 'http://www.w3.org/2000/svg';
const originX = 214, originY = 105;

function add(name, attrs) {
  const el = document.createElementNS(NS, name);
  for (const key in attrs) el.setAttribute(key, attrs[key]);
  svg.appendChild(el);
}

// Grid: a vertical every 32px, a horizontal for each price label.
const grid = { stroke: '#6f7f8f', 'stroke-width': 1, 'stroke-dasharray': '4 4' };
for (let x = 32; x < 2400; x += 32) add('line', { x1: x + .5, x2: x + .5, y1: 0, y2: '100%', ...grid });
for (let i = 0; i < 40; i++) {
  const y = Math.round(23 + i * 33.24) + .5;
  add('line', { x1: 0, x2: '100%', y1: y, y2: y, ...grid });
}
add('line', { x1: 0, x2: '100%', y1: 198.5, y2: 198.5, stroke: '#778899' });

// Each series: first x, then [high, low] for bars 2px apart.
const series = [
  [214, [173,197],[165,190],[162,190],[167,208],[165,196],[149,170],[147,162],[148,172],[151,166],[142,170],[163,176],[168,186],[165,178],[155,170],[155,172],[160,182],[150,170],[154,170],[154,168],[154,166],[158,166],[155,164],[135,162],[138,160],[138,155],[145,168],[152,170],[155,172],[157,182],[148,178],[150,165],[158,176],[152,170],[165,181],[165,182],[165,182],[170,183],[168,181],[162,174],[161,176],[162,173],[162,178],[171,182],[167,182],[172,184],[175,185],[176,186]],
  [1036, [294,312],[302,322],[287,320],[265,297],[255,278],[260,281],[267,283],[259,280],[259,281],[269,280],[258,280],[258,278],[272,302],[268,293],[276,290],[283,295],[286,302],[285,302],[280,293],[290,302],[285,327],[293,325],[297,317],[290,308],[287,308],[278,305],[286,300],[290,308],[290,304],[290,303],[293,331],[298,339],[281,313],[291,302],[290,304],[291,303],[281,296],[287,300],[284,297],[280,293],[268,287],[261,280],[262,273],[217,275],[205,243],[175,209],[177,190],[179,199],[195,230],[204,237],[193,213],[193,218],[194,218],[198,220],[192,208],[182,217],[193,219],[200,219],[205,220],[200,217],[175,215],[195,213],[198,213],[200,210],[193,218],[202,219],[195,213],[200,218],[203,223],[200,218],[194,213],[197,207],[200,212],[197,220],[195,213],[191,207],[195,207],[194,206],[194,205],[194,203],[192,205],[194,213],[194,205],[192,200],[195,233],[207,252],[233,247],[234,251],[234,248],[227,242],[217,233],[207,225],[218,240],[222,243],[222,248],[222,247],[218,243],[230,267],[265,298],[262,303],[271,290],[278,290],[285,303],[297,311],[297,308]],
  [546, [640,696],[640,714],[640,696],[672,705],[676,713],[664,699],[640,681]]
];
for (const [start, ...rows] of series) {
  rows.forEach(([hi, lo], i) => {
    add('rect', { x: start + i * 2 - originX, y: hi - originY, width: 1, height: lo - hi, fill: '#00ff00' });
  });
}

// Moving averages
const average = [
  [[214,168],[219,171],[225,176],[231,173],[237,172],[243,167],[251,162],[260,161],[265,156],[275,157],[283,163],[290,167],[298,171],[303,176],[309,182],[316,192]],
  [[1030,318],[1036,311],[1042,307],[1048,293],[1055,286],[1063,279],[1068,277],[1073,279],[1078,286],[1085,293],[1095,298],[1102,302],[1108,299],[1116,297],[1123,290],[1130,260],[1137,237],[1145,213],[1150,202],[1157,206],[1163,203],[1173,206],[1182,203],[1192,205],[1202,201],[1211,213],[1220,219],[1229,230],[1233,240],[1239,248],[1244,264]]
];
for (const line of average) {
  add('polyline', { points: line.map(([x, y]) => `${x - originX},${y - originY}`).join(' '), fill: 'none', stroke: '#ff0000', 'stroke-width': 4, 'stroke-linejoin': 'round', 'stroke-linecap': 'round' });
}
```
